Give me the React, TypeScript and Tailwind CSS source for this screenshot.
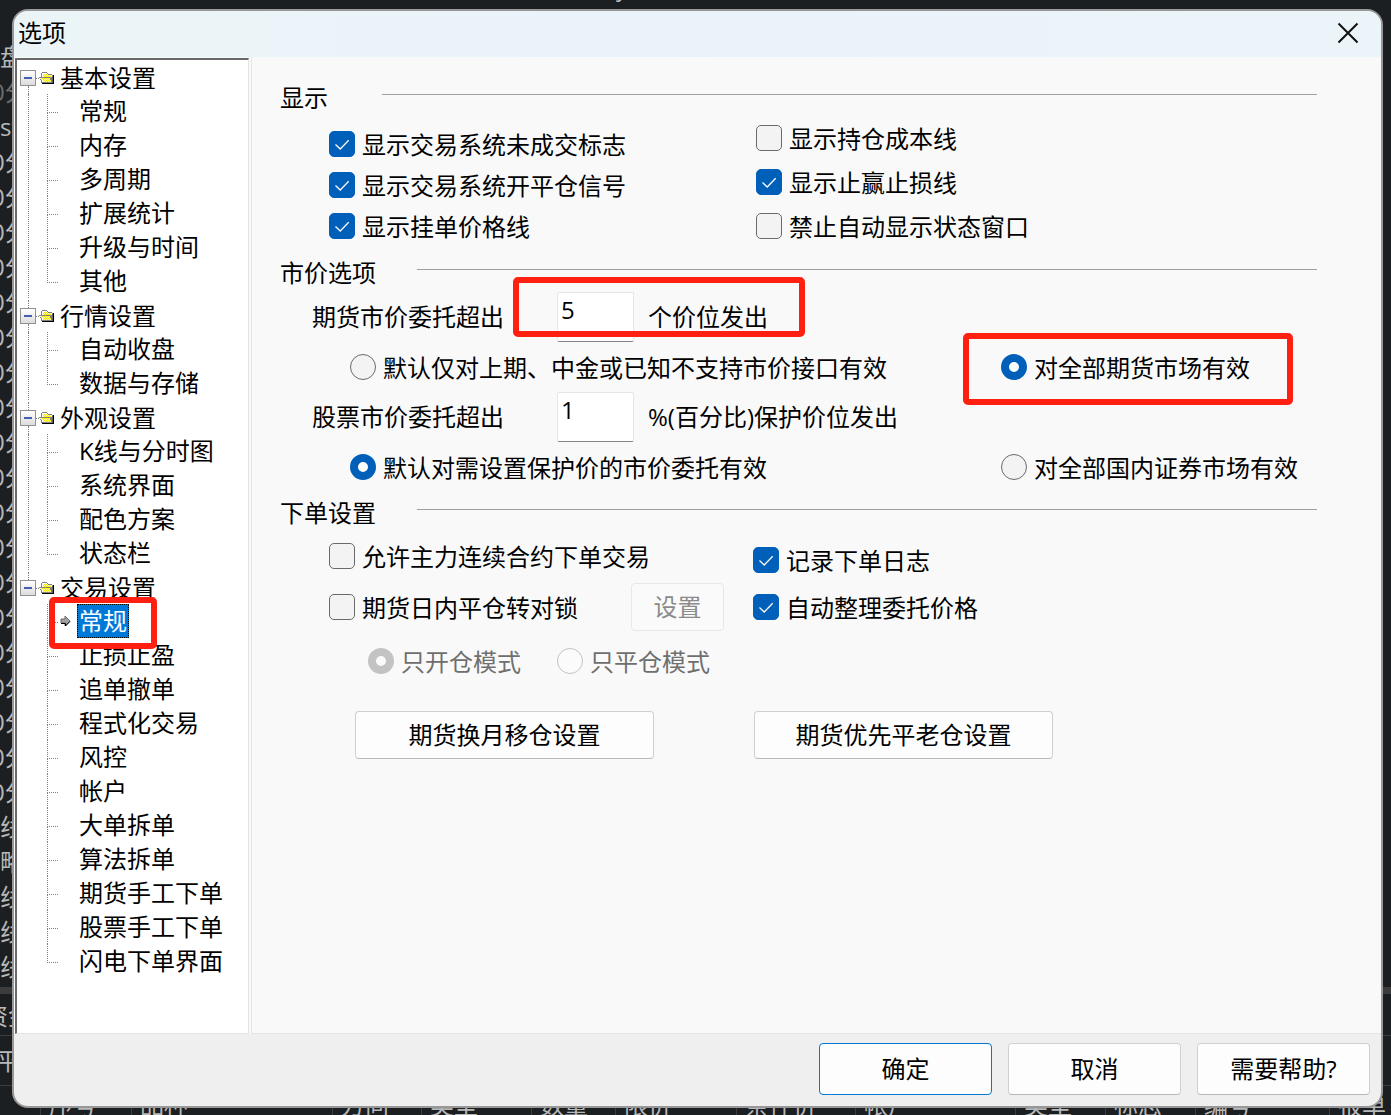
import { useState } from 'react'
import type { ReactNode } from 'react'

const TREE = [
  { title: '基本设置', items: ['常规', '内存', '多周期', '扩展统计', '升级与时间', '其他'] },
  { title: '行情设置', items: ['自动收盘', '数据与存储'] },
  { title: '外观设置', items: ['K线与分时图', '系统界面', '配色方案', '状态栏'] },
  {
    title: '交易设置',
    items: ['常规', '止损止盈', '追单撤单', '程式化交易', '风控', '帐户', '大单拆单', '算法拆单', '期货手工下单', '股票手工下单', '闪电下单界面'],
  },
]

const BACKDROP_ROWS = ['盘', '0分', 'st', ...Array<string>(19).fill('0分'), '线', '略', '线', '线', '线']

// column headers of the order table under the dialog, with their x position
const BACKDROP_COLS: [string, number][] = [
  ['序号', 49], ['品种', 140], ['方向', 341], ['类型', 430], ['数量', 540], ['限价', 624],
  ['条件价', 745], ['帐户', 864], ['类型', 1024], ['标志', 1114], ['编号', 1204], ['报单', 1338],
]

function Folder() {
  return (
    <svg width="16" height="14" viewBox="0 0 16 14" shapeRendering="crispEdges" className="shrink-0" aria-hidden="true">
      <defs>
        <pattern id="dither" width="2" height="2" patternUnits="userSpaceOnUse">
          <rect width="2" height="2" fill="#fffb90" />
          <rect width="1" height="1" fill="#f4ee00" />
          <rect x="1" y="1" width="1" height="1" fill="#f4ee00" />
        </pattern>
      </defs>
      <path d="M14 4h1v9H3v-1h11z" fill="#000" />
      <path d="M2 6V2h1V1h5v1h1v1h4v1h1v8H2z" fill="#808080" />
      <path d="M3 2h5v1h1v1h4v2H3z" fill="#fff" />
      <path d="M4 3h4v1h4v2H4z" fill="url(#dither)" />
      <path d="M0 6h12v1h1v2h1v3H3v-1H2V9H1V7H0z" fill="#808080" />
      <path d="M1 7h10v2h1v2H3V9H2V8H1z" fill="#fff" />
      <path d="M2 7h9v2h1v2H4V9H2z" fill="url(#dither)" />
      <path d="M13 5h1v7h-1z" fill="#606060" />
    </svg>
  )
}

function Arrow() {
  return (
    <svg width="11" height="12" viewBox="0 0 11 12" className="shrink-0" aria-hidden="true">
      <path d="M1 4h4V1l5 5-5 5V8H1z" fill="#a0a0a0" stroke="#6b6b6b" />
      <path d="M1 8.500h4.500v2.500L10 6.500" fill="none" stroke="#000" />
    </svg>
  )
}

function Callout({ className }: { className: string }) {
  return <span className={`pointer-events-none absolute z-10 rounded-[5px] border-6 border-[#ff2012] ${className}`} />
}

function Check({ label, checked }: { label: string; checked?: boolean }) {
  return (
    <label className="flex h-[26px] items-center gap-[7px] whitespace-nowrap">
      <span className="relative size-[26px] shrink-0">
        <input
          type="checkbox"
          defaultChecked={checked}
          className="peer block size-[26px] appearance-none rounded-[5px] border border-[#6a6a6a] bg-[#f3f3f3] checked:border-[#005fb8] checked:bg-[#005fb8]"
        />
        <svg viewBox="0 0 26 26" className="pointer-events-none invisible absolute inset-0 peer-checked:visible" aria-hidden="true">
          <path d="M6.500 13.500l4.700 4.500 8.500-8.700" fill="none" stroke="#fff" strokeWidth="1.300" />
        </svg>
      </span>
      <span className="pt-[2px]">{label}</span>
    </label>
  )
}

function Radio({ label, name, checked, disabled }: { label: string; name: string; checked?: boolean; disabled?: boolean }) {
  return (
    <label className={`flex h-[26px] items-center gap-[7px] whitespace-nowrap ${disabled ? 'text-[#6f6f6f]' : ''}`}>
      <input
        type="radio"
        name={name}
        defaultChecked={checked}
        disabled={disabled}
        className="size-[26px] shrink-0 appearance-none rounded-full border border-[#6a6a6a] bg-[#f3f3f3] checked:border-8 checked:border-[#005fb8] checked:bg-white disabled:border-[#c3c3c3] disabled:bg-[#fbfbfb]"
      />
      <span className="pt-[2px]">{label}</span>
    </label>
  )
}

function Heading({ children, short }: { children: ReactNode; short?: boolean }) {
  return (
    <div className="flex h-[34px] items-center pr-16">
      <h2 className={short ? 'w-[102px]' : 'w-[137px]'}>{children}</h2>
      <span className="mb-2 h-px flex-1 bg-[#a0a0a0]" />
    </div>
  )
}

function Price({ id, before, after, value, children }: { id: string; before: string; after: string; value: string; children?: ReactNode }) {
  return (
    <div className="flex h-[50px] items-center">
      <label htmlFor={id} className="w-[245px]">{before}</label>
      <div className="relative flex items-center gap-[14px]">
        <input
          id={id}
          defaultValue={value}
          className="h-[50px] w-[77px] rounded-[2px] border border-[#e6e6e6] border-b-[#868686] bg-white pb-4 pl-[3px] outline-none"
        />
        <span>{after}</span>
        {children}
      </div>
    </div>
  )
}

function Button({ children, className, disabled }: { children: ReactNode; className: string; disabled?: boolean }) {
  return (
    <button
      type="button"
      disabled={disabled}
      className={`rounded-[4px] border ${disabled ? 'border-[#e8e8e8] bg-[#fafafa] text-[#8b8b8b]' : 'bg-[#fdfdfd]'} ${className}`}
    >
      {children}
    </button>
  )
}

function Tree() {
  const [selected, setSelected] = useState('3-0')

  return (
    <nav className="mt-px w-[234px] shrink-0 border-t-2 border-r border-b border-l-2 border-t-[#696969] border-r-[#e3e3e3] border-b-[#e3e3e3] border-l-[#696969] bg-white">
      {TREE.map((group, g) => {
        const lastGroup = g === TREE.length - 1
        return (
          <div key={group.title}>
            <div className="flex h-[34px] items-center pt-[2px]">
              <div className="ml-[3px] flex h-full w-4 flex-col items-center">
                <span className={`ml-px flex-1 border-l border-dotted ${g === 0 ? 'border-transparent' : 'border-[#808080]'}`} />
                <button type="button" aria-label={group.title} className="flex size-4 items-center justify-center border border-[#919191] bg-linear-to-b from-white to-[#dcdcdc]">
                  <span className="h-[2px] w-2 bg-[#4160b0]" />
                </button>
                <span className={`ml-px flex-1 border-l border-dotted ${lastGroup ? 'border-transparent' : 'border-[#808080]'}`} />
              </div>
              <span className="w-[3px] border-b border-dotted border-[#808080]" />
              <Folder />
              <span className="pl-[5px]">{group.title}</span>
            </div>
            <ul className={`ml-[11px] border-l border-dotted ${lastGroup ? 'border-transparent' : 'border-[#808080]'}`}>
              {group.items.map((item, i) => {
                const key = `${g}-${i}`
                const active = key === selected
                return (
                  <li key={key} className="relative flex h-[34px] items-center pl-[18px]">
                    <span className="flex h-full w-[11px] flex-col">
                      <span className="h-[19px] border-b border-l border-dotted border-[#808080]" />
                      {i < group.items.length - 1 && <span className="flex-1 border-l border-dotted border-[#808080]" />}
                    </span>
                    <span className="flex w-[19px] pl-[2px]">{active && <Arrow />}</span>
                    <button
                      type="button"
                      onClick={() => setSelected(key)}
                      className={`h-[34px] border border-dotted px-px leading-8 ${active ? 'border-black bg-[#0078d7] text-white' : 'border-transparent'}`}
                    >
                      {item}
                    </button>
                    {key === '3-0' && <Callout className="-top-[7px] left-5 h-[52px] w-[108px]" />}
                  </li>
                )
              })}
            </ul>
          </div>
        )
      })}
    </nav>
  )
}

function Backdrop() {
  return (
    <div className="absolute inset-0 overflow-hidden text-[#b8b8b8]" aria-hidden="true">
      <span className="absolute -top-[30px] left-[616px]">y</span>
      <div className="absolute top-10 left-0 w-10">
        {BACKDROP_ROWS.map((row, i) => (
          <div key={i} className={`h-[35px] whitespace-nowrap ${row === '0分' ? '-ml-[9px]' : ''} ${i === 1 ? 'text-[#6d6d6d]' : ''}`}>{row}</div>
        ))}
      </div>
      <div className="absolute top-[987px] h-[7px] w-full bg-[#3c3c3c]" />
      <div className="absolute top-[999px] -left-4 w-14">资金</div>
      <div className="absolute top-[1035px] h-px w-full bg-[#3c3c3c]" />
      <div className="absolute top-[1044px] -left-1">平</div>
      <div className="absolute top-[1085px] h-px w-full bg-[#3c3c3c]" />
      {BACKDROP_COLS.map(([name, x]) => (
        <span key={x} className="absolute top-[1088px] h-[34px] whitespace-nowrap" style={{ left: x }}>
          <span className="absolute top-0 -left-[9px] h-full w-px bg-[#3c3c3c]" />
          {name}
        </span>
      ))}
    </div>
  )
}

export default function App() {
  return (
    <div className="relative flex min-h-screen overflow-hidden bg-[#1c1f22] pt-[9px] pr-2 pb-[7px] pl-3 font-['Open_Sans','Noto_Sans_CJK_SC',sans-serif] text-[24px] leading-[34px] text-black">
      <Backdrop />
      <main className="relative flex flex-1 flex-col overflow-hidden rounded-[16px] border-2 border-[#989898] bg-[#efefef]">
        <header className="flex h-[46px] items-center justify-between bg-linear-to-r from-[#ebf4f6] via-[#eaf3fa] to-[#ebf4f8] pr-[21px] pb-[2px] pl-1">
          <h1>选项</h1>
          <button type="button" aria-label="关闭" className="p-px">
            <svg width="22" height="22" viewBox="0 0 22 22" aria-hidden="true">
              <path d="M1.500 1.500l19 19M20.500 1.500l-19 19" stroke="#111" strokeWidth="2" />
            </svg>
          </button>
        </header>

        <div className="flex flex-1 bg-[#f9f9f9] pl-px">
          <Tree />
          <div className="ml-[2px] flex-1 border-b border-l border-[#e5e5e5] pt-6 pl-7">
            <section>
              <Heading short>显示</Heading>
              <div className="mt-[10px] flex pl-[49px]">
                <div className="flex w-[427px] flex-col gap-[15px] pt-[6px]">
                  <Check label="显示交易系统未成交标志" checked />
                  <Check label="显示交易系统开平仓信号" checked />
                  <Check label="显示挂单价格线" checked />
                </div>
                <div className="flex flex-col gap-[18px]">
                  <Check label="显示持仓成本线" />
                  <Check label="显示止赢止损线" checked />
                  <Check label="禁止自动显示状态窗口" />
                </div>
              </div>
            </section>

            <section className="mt-[17px]">
              <Heading>市价选项</Heading>
              <div className="mt-[2px] flex flex-col gap-3 pl-8">
                <Price id="futures" before="期货市价委托超出" after="个价位发出" value="5">
                  <Callout className="-top-[15px] -left-[44px] h-[60px] w-[292px]" />
                </Price>
                <div className="flex pl-[38px]">
                  <div className="w-[651px]">
                    <Radio name="futures-scope" label="默认仅对上期、中金或已知不支持市价接口有效" />
                  </div>
                  <div className="relative">
                    <Radio name="futures-scope" label="对全部期货市场有效" checked />
                    <Callout className="-top-[21px] -left-[38px] h-[72px] w-[330px]" />
                  </div>
                </div>
                <Price id="stocks" before="股票市价委托超出" after="%(百分比)保护价位发出" value="1" />
                <div className="flex pl-[38px]">
                  <div className="w-[651px]">
                    <Radio name="stock-scope" label="默认对需设置保护价的市价委托有效" checked />
                  </div>
                  <Radio name="stock-scope" label="对全部国内证券市场有效" />
                </div>
              </div>
            </section>

            <section className="mt-4">
              <Heading>下单设置</Heading>
              <div className="mt-[13px] flex pl-[49px]">
                <div className="flex w-[424px] flex-col gap-[14px]">
                  <Check label="允许主力连续合约下单交易" />
                  <div className="flex items-center">
                    <div className="w-[302px]">
                      <Check label="期货日内平仓转对锁" />
                    </div>
                    <Button disabled className="h-12 w-[93px]">设置</Button>
                  </div>
                </div>
                <div className="flex flex-col gap-[21px] pt-1">
                  <Check label="记录下单日志" checked />
                  <Check label="自动整理委托价格" checked />
                </div>
              </div>
              <div className="mt-[17px] flex gap-9 pl-[88px]">
                <Radio name="mode" label="只开仓模式" checked disabled />
                <Radio name="mode" label="只平仓模式" disabled />
              </div>
              <div className="mt-[37px] flex gap-[100px] pl-[75px]">
                <Button className="h-12 w-[299px] border-[#d0d0d0] border-b-[#b8b8b8]">期货换月移仓设置</Button>
                <Button className="h-12 w-[299px] border-[#d0d0d0] border-b-[#b8b8b8]">期货优先平老仓设置</Button>
              </div>
            </section>
          </div>
        </div>

        <footer className="flex justify-end gap-4 pt-[9px] pr-[11px] pb-[11px]">
          <Button className="h-[52px] w-[173px] border-[#0078d4]">确定</Button>
          <Button className="h-[52px] w-[173px] border-[#d0d0d0] border-b-[#b8b8b8]">取消</Button>
          <Button className="h-[52px] w-[173px] border-[#d0d0d0] border-b-[#b8b8b8]">需要帮助?</Button>
        </footer>
      </main>
    </div>
  )
}
